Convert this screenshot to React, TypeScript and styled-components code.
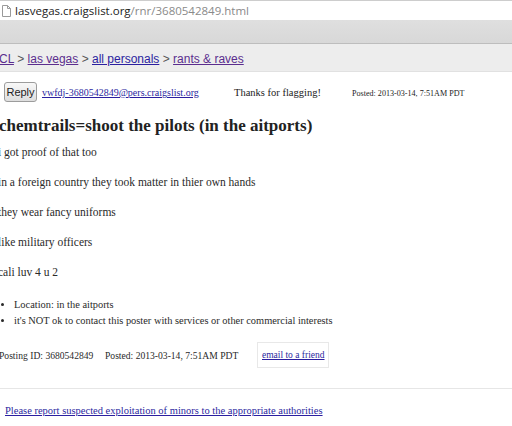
import React from 'react';
import styled, { createGlobalStyle } from 'styled-components';

const GlobalStyle = createGlobalStyle`
  html, body {
    margin: 0;
    padding: 0;
    background: #fff;
  }
  body {
    width: 512px;
    height: 426px;
    overflow: hidden;
  }
`;

const Page = styled.div`
  width: 512px;
  height: 426px;
  overflow: hidden;
  display: flex;
  flex-direction: column;
`;

const AddressBar = styled.div`
  height: 19px;
  border-top: 1px solid #cdcdcd;
  display: flex;
  align-items: center;
  gap: 4px;
  padding-left: 2px;
  font-family: 'Open Sans', sans-serif;
  font-size: 11.5px;
  color: #222;
  white-space: nowrap;
`;

const Path = styled.span`
  color: #8a8a8a;
`;

const Toolbar = styled.div`
  height: 23px;
  background: linear-gradient(#dfdfdf, #d8d8d8);
  border-bottom: 1px solid #bdbdbd;
`;

const Crumbs = styled.div`
  height: 19px;
  padding-top: 8px;
  background: #ededed;
  border-bottom: 1px solid #e1e1e1;
  font-family: 'Liberation Sans', Arial, sans-serif;
  font-size: 12px;
  line-height: 14px;
  color: #555;
  margin-left: -1px;
  white-space: nowrap;
`;

const Link = styled.a<{ $visited?: boolean }>`
  color: ${(p) => (p.$visited ? '#5b2d8e' : '#2b1fa0')};
  text-decoration: underline;
`;

const Main = styled.main`
  padding-top: 10px;
  font-family: 'Liberation Serif', 'Times New Roman', serif;
  color: #333;
`;

const ReplyRow = styled.div`
  display: grid;
  grid-template-columns: 38px 192px 118px auto;
  align-items: baseline;
  padding-left: 4px;
  white-space: nowrap;
`;

const ReplyButton = styled.button`
  width: 33px;
  height: 20px;
  padding: 0;
  border: 1px solid #9c9c9c;
  border-radius: 3px;
  background: linear-gradient(#f8f8f8, #dedede);
  font-family: 'Liberation Sans', Arial, sans-serif;
  font-size: 11px;
  color: #222;
`;

const Small = styled.span<{ $size: number }>`
  font-size: ${(p) => p.$size}px;
  color: #222;
`;

const Title = styled.h1`
  margin: 14px 0 0 -1px;
  font-size: 17px;
  line-height: 20px;
  font-weight: bold;
  color: #222;
  white-space: nowrap;
`;

const Body = styled.section`
  margin: 1px 0 0 -2px;
  font-size: 11.5px;
  line-height: 30px;
  color: #2a2a2a;
`;

const Line = styled.p`
  margin: 0;
  white-space: nowrap;
`;

const Notices = styled.ul`
  margin: 10px 0 0;
  padding-left: 14px;
  font-size: 10.4px;
  line-height: 16px;
  color: #2a2a2a;
  white-space: nowrap;
`;

const PostingRow = styled.div`
  display: grid;
  grid-template-columns: 106px 152px auto;
  align-items: center;
  margin: 13px 0 0 -1px;
  font-size: 9.6px;
  color: #2a2a2a;
  white-space: nowrap;
`;

const EmailBox = styled.div`
  box-sizing: border-box;
  width: 72px;
  height: 26px;
  padding-left: 4px;
  border: 1px solid #e8e8e8;
  display: flex;
  align-items: center;
  font-size: 9.5px;
`;

const Rule = styled.hr`
  margin: 20px 0 0;
  border: 0;
  border-top: 1px solid #e6e6e6;
  height: 0;
`;

const Report = styled.div`
  margin: 16px 0 0 5px;
  font-size: 10.5px;
  line-height: 12px;
  white-space: nowrap;
`;

const PageIcon = () => (
  <svg width="9" height="12" viewBox="0 0 9 12">
    <path d="M0.5 0.5 H5.5 L8.5 3.5 V11.5 H0.5 Z" fill="#fff" stroke="#9a9a9a" />
    <path d="M5.5 0.5 V3.5 H8.5" fill="none" stroke="#9a9a9a" />
  </svg>
);

const bodyLines = [
  'i got proof of that too',
  'in a foreign country they took matter in thier own hands',
  'they wear fancy uniforms',
  'like military officers',
  'cali luv 4 u 2',
];

const App = () => {
  return (
    <Page>
      <GlobalStyle />
      <AddressBar>
        <PageIcon />
        <span>
          lasvegas.craigslist.org<Path>/rnr/3680542849.html</Path>
        </span>
      </AddressBar>
      <Toolbar />
      <Crumbs>
        <Link $visited href="#">CL</Link> &gt; <Link $visited href="#">las vegas</Link> &gt;{' '}
        <Link href="#">all personals</Link> &gt; <Link $visited href="#">rants &amp; raves</Link>
      </Crumbs>
      <Main>
        <ReplyRow>
          <ReplyButton>Reply</ReplyButton>
          <Small $size={10}>
            <Link href="#">vwfdj-3680542849@pers.craigslist.org</Link>
          </Small>
          <Small $size={10.5}>Thanks for flagging!</Small>
          <Small $size={8.1}>Posted: 2013-03-14, 7:51AM PDT</Small>
        </ReplyRow>
        <Title>chemtrails=shoot the pilots (in the aitports)</Title>
        <Body>
          {bodyLines.map((line) => (
            <Line key={line}>{line}</Line>
          ))}
        </Body>
        <Notices>
          <li>Location: in the aitports</li>
          <li>it's NOT ok to contact this poster with services or other commercial interests</li>
        </Notices>
        <PostingRow>
          <span>Posting ID: 3680542849</span>
          <span>Posted: 2013-03-14, 7:51AM PDT</span>
          <EmailBox>
            <Link href="#">email to a friend</Link>
          </EmailBox>
        </PostingRow>
        <Rule />
        <Report>
          <Link href="#">Please report suspected exploitation of minors to the appropriate authorities</Link>
        </Report>
      </Main>
    </Page>
  );
};

export default App;
